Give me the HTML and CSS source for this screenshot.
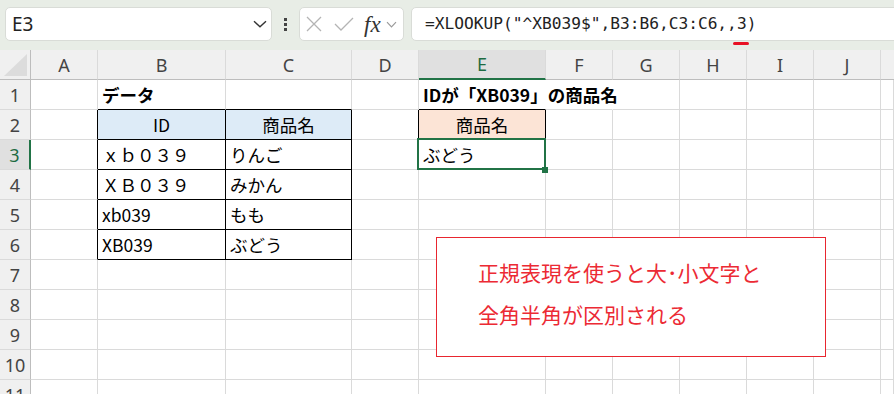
FILE: index.html
```html
<!DOCTYPE html>
<html lang="ja">
<head>
<meta charset="utf-8">
<title>XLOOKUP 正規表現</title>
<link rel="stylesheet" href="styles.css">
</head>
<body>
<div class="toolbar">
    <div class="namebox">
        <span class="ref">E3</span>
        <svg class="chev" width="14" height="8" viewBox="0 0 14 8"><path d="M1 1.2 L7 6.8 L13 1.2" fill="none" stroke="#333" stroke-width="1.4"/></svg>
    </div>
    <div class="dots"><i></i><i></i><i></i></div>
    <div class="fxbox">
        <svg class="cancel" width="16" height="16" viewBox="0 0 16 16"><path d="M1 1 L15 15 M15 1 L1 15" stroke="#b4b4b4" stroke-width="1.3" fill="none"/></svg>
        <svg class="enter" width="20" height="14" viewBox="0 0 20 14"><path d="M1 7 L7 13 L19 1" stroke="#b4b4b4" stroke-width="1.3" fill="none"/></svg>
        <span class="fx">fx</span>
        <svg class="chev-sm" width="11" height="7" viewBox="0 0 11 7"><path d="M1 1.2 L5.5 5.8 L10 1.2" fill="none" stroke="#9a9a9a" stroke-width="1.2"/></svg>
    </div>
    <div class="formula">=XLOOKUP("^XB039$",B3:B6,C3:C6,,<span class="err">3</span>)</div>
</div>

<div class="sheet">
    <div class="row head">
        <div class="corner"><svg width="23" height="22" viewBox="0 0 23 22"><path d="M23 0 L23 22 L0 22 Z" fill="#dcdcdc"/></svg></div>
        <div class="ch">A</div>
        <div class="ch">B</div>
        <div class="ch">C</div>
        <div class="ch">D</div>
        <div class="ch sel">E</div>
        <div class="ch">F</div>
        <div class="ch">G</div>
        <div class="ch">H</div>
        <div class="ch">I</div>
        <div class="ch">J</div>
        <div class="ch last"></div>
    </div>

    <div class="row">
        <div class="rh">1</div>
        <div class="c"></div>
        <div class="c bb bold">データ</div>
        <div class="c bb"></div>
        <div class="c"></div>
        <div class="c bb bold spill">IDが「XB039」の商品名</div>
        <div class="c nor"></div>
        <div class="c"></div>
        <div class="c"></div>
        <div class="c"></div>
        <div class="c"></div>
        <div class="c"></div>
    </div>

    <div class="row">
        <div class="rh">2</div>
        <div class="c br"></div>
        <div class="c bb br blue mid">ID</div>
        <div class="c bb br blue mid">商品名</div>
        <div class="c br"></div>
        <div class="c bb br peach mid">商品名</div>
        <div class="c"></div>
        <div class="c"></div>
        <div class="c"></div>
        <div class="c"></div>
        <div class="c"></div>
        <div class="c"></div>
    </div>

    <div class="row">
        <div class="rh sel">3</div>
        <div class="c br"></div>
        <div class="c bb br">ｘｂ０３９</div>
        <div class="c bb br">りんご</div>
        <div class="c"></div>
        <div class="c active">ぶどう</div>
        <div class="c"></div>
        <div class="c"></div>
        <div class="c"></div>
        <div class="c"></div>
        <div class="c"></div>
        <div class="c"></div>
    </div>

    <div class="row">
        <div class="rh">4</div>
        <div class="c br"></div>
        <div class="c bb br">ＸＢ０３９</div>
        <div class="c bb br">みかん</div>
        <div class="c"></div>
        <div class="c"></div>
        <div class="c"></div>
        <div class="c"></div>
        <div class="c"></div>
        <div class="c"></div>
        <div class="c"></div>
        <div class="c"></div>
    </div>

    <div class="row">
        <div class="rh">5</div>
        <div class="c br"></div>
        <div class="c bb br">xb039</div>
        <div class="c bb br">もも</div>
        <div class="c"></div>
        <div class="c"></div>
        <div class="c"></div>
        <div class="c"></div>
        <div class="c"></div>
        <div class="c"></div>
        <div class="c"></div>
        <div class="c"></div>
    </div>

    <div class="row">
        <div class="rh">6</div>
        <div class="c br"></div>
        <div class="c bb br">XB039</div>
        <div class="c bb br">ぶどう</div>
        <div class="c"></div>
        <div class="c"></div>
        <div class="c"></div>
        <div class="c"></div>
        <div class="c"></div>
        <div class="c"></div>
        <div class="c"></div>
        <div class="c"></div>
    </div>

    <div class="row">
        <div class="rh">7</div>
        <div class="c"></div><div class="c"></div><div class="c"></div><div class="c"></div><div class="c"></div><div class="c"></div><div class="c"></div><div class="c"></div><div class="c"></div><div class="c"></div><div class="c"></div>
    </div>
    <div class="row">
        <div class="rh">8</div>
        <div class="c"></div><div class="c"></div><div class="c"></div><div class="c"></div><div class="c"></div><div class="c"></div><div class="c"></div><div class="c"></div><div class="c"></div><div class="c"></div><div class="c"></div>
    </div>
    <div class="row">
        <div class="rh">9</div>
        <div class="c"></div><div class="c"></div><div class="c"></div><div class="c"></div><div class="c"></div><div class="c"></div><div class="c"></div><div class="c"></div><div class="c"></div><div class="c"></div><div class="c"></div>
    </div>
    <div class="row">
        <div class="rh">10</div>
        <div class="c"></div><div class="c"></div><div class="c"></div><div class="c"></div><div class="c"></div><div class="c"></div><div class="c"></div><div class="c"></div><div class="c"></div><div class="c"></div><div class="c"></div>
    </div>
    <div class="row">
        <div class="rh">11</div>
        <div class="c"></div><div class="c"></div><div class="c"></div><div class="c"></div><div class="c"></div><div class="c"></div><div class="c"></div><div class="c"></div><div class="c"></div><div class="c"></div><div class="c"></div>
    </div>

    <div class="note">
        <p>正規表現を使うと大･小文字と</p>
        <p>全角半角が区別される</p>
    </div>
</div>
</body>
</html>
```

FILE: styles.css
```css
* {
    box-sizing: border-box;
}
body {
    margin: 0;
    height: 394px;
    overflow: hidden;
    background: #fff;
    font-family: "Noto Sans CJK JP", sans-serif;
}

/* formula bar */
.toolbar {
    height: 50px;
    background: #e8ede6;
    display: flex;
    align-items: flex-start;
    padding: 7px 0 0 5px;
}
.namebox {
    width: 267px;
    height: 34px;
    background: #fff;
    border: 1px solid #d9dcd7;
    border-radius: 5px;
    display: flex;
    align-items: center;
    justify-content: space-between;
    padding: 0 4px 0 6px;
}
.ref {
    font-family: "Noto Sans", sans-serif;
    font-size: 19px;
    color: #222;
}
.dots {
    display: flex;
    flex-direction: column;
    gap: 2px;
    margin: 11px 12px 0 12px;
}
.dots i {
    display: block;
    width: 3px;
    height: 3px;
    background: #444;
}
.fxbox {
    width: 105px;
    height: 34px;
    background: #fff;
    border: 1px solid #d9dcd7;
    border-radius: 5px;
    display: flex;
    align-items: center;
    padding-left: 6px;
}
.cancel {
    margin-right: 12px;
}
.enter {
    margin-right: 10px;
}
.fx {
    font-family: "Liberation Serif", serif;
    font-style: italic;
    font-size: 23px;
    color: #333;
    margin-right: 5px;
    line-height: 1;
}
.formula {
    flex: 1;
    height: 34px;
    margin-left: 7px;
    margin-right: -20px;
    background: #fff;
    border: 1px solid #d9dcd7;
    border-radius: 5px;
    padding-left: 13px;
    font-family: "DejaVu Sans Mono", monospace;
    font-size: 16.2px;
    line-height: 32px;
    color: #222;
    white-space: nowrap;
}
.err {
    position: relative;
}
.err::after {
    content: "";
    position: absolute;
    left: -4px;
    right: -2px;
    top: 28px;
    height: 3px;
    border-radius: 2px;
    background: #e81123;
}

/* sheet */
.sheet {
    position: relative;
}
.row {
    display: grid;
    grid-template-columns: 31px 67px 128px 126px 67px 127px 67px 67px 67px 67px 67px 1fr;
    height: 30px;
}
.head .ch,
.head .corner {
    background: #f0f0f0;
    border-right: 1px solid #dadada;
    border-bottom: 1px solid #bdbdbd;
    display: flex;
    align-items: center;
    justify-content: center;
    font-family: "Noto Sans", sans-serif;
    font-size: 18px;
    color: #444;
}
.head .corner {
    border-right-color: #bdbdbd;
    align-items: flex-end;
    justify-content: flex-end;
    padding: 0 3px 3px 0;
}
.head .last {
    border-right: none;
}
.head .sel {
    background: #e0e0e0;
    color: #1e6b42;
    border-bottom: 2px solid #217346;
}
.rh {
    background: #f0f0f0;
    border-right: 1px solid #bdbdbd;
    border-bottom: 1px solid #dadada;
    display: flex;
    align-items: center;
    justify-content: center;
    font-family: "Noto Sans", sans-serif;
    font-size: 18px;
    color: #444;
    white-space: nowrap;
}
.rh.sel {
    background: #e0e0e0;
    color: #1e6b42;
    border-right: 2px solid #217346;
}
.c {
    border-right: 1px solid #dadada;
    border-bottom: 1px solid #dadada;
    display: flex;
    align-items: center;
    padding: 0 4px;
    font-size: 17.5px;
    color: #000;
    white-space: nowrap;
}
.c.bb {
    border-bottom-color: #000;
}
.c.br {
    border-right-color: #000;
}
.c.nor {
    border-right-color: transparent;
}
.spill {
    border-right-color: transparent;
    overflow: visible;
    position: relative;
    z-index: 1;
}
.bold {
    font-weight: 700;
}
.mid {
    justify-content: center;
}
.blue {
    background: #ddebf7;
}
.peach {
    background: #fce4d6;
}
.active {
    position: relative;
}
.active::after {
    content: "";
    position: absolute;
    top: -2px;
    left: -2px;
    right: -1px;
    bottom: -1px;
    border: 2px solid #217346;
}
.active::before {
    content: "";
    position: absolute;
    right: -3px;
    bottom: -4px;
    width: 6px;
    height: 6px;
    background: #217346;
    z-index: 1;
}

/* text box on the sheet */
.note {
    position: absolute;
    left: 436px;
    top: 187px;
    width: 390px;
    height: 120px;
    background: #fff;
    border: 1px solid #e8262f;
    padding: 13px 0 0 41px;
    color: #ec2a34;
    font-size: 21px;
    line-height: 42px;
}
.note p {
    margin: 0;
}
```
